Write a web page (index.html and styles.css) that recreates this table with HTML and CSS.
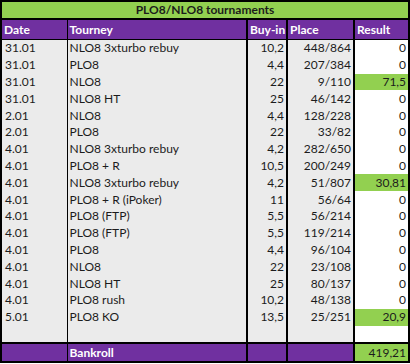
FILE: index.html
```html
<!DOCTYPE html>
<html>
<head>
<meta charset="utf-8">
<link rel="stylesheet" href="styles.css">
</head>
<body>
<table class="sheet">
  <colgroup>
    <col class="c-date"><col class="c-tour"><col class="c-buy"><col class="c-place"><col class="c-res">
  </colgroup>
  <thead>
    <tr class="title"><th colspan="5">PLO8/NLO8 tournaments</th></tr>
    <tr class="head">
      <th class="d">Date</th><th class="t">Tourney</th><th class="b">Buy-in</th><th class="p">Place</th><th class="r">Result</th>
    </tr>
  </thead>
  <tbody>
    <tr><td class="d">31.01</td><td class="t">NLO8 3xturbo rebuy</td><td class="b">10,2</td><td class="p">448/864</td><td class="r">0</td></tr>
    <tr><td class="d">31.01</td><td class="t">PLO8</td><td class="b">4,4</td><td class="p">207/384</td><td class="r">0</td></tr>
    <tr><td class="d">31.01</td><td class="t">NLO8</td><td class="b">22</td><td class="p">9/110</td><td class="r win">71,5</td></tr>
    <tr><td class="d">31.01</td><td class="t">NLO8 HT</td><td class="b">25</td><td class="p">46/142</td><td class="r">0</td></tr>
    <tr><td class="d">2.01</td><td class="t">NLO8</td><td class="b">4,4</td><td class="p">128/228</td><td class="r">0</td></tr>
    <tr><td class="d">2.01</td><td class="t">PLO8</td><td class="b">22</td><td class="p">33/82</td><td class="r">0</td></tr>
    <tr><td class="d">4.01</td><td class="t">NLO8 3xturbo rebuy</td><td class="b">4,2</td><td class="p">282/650</td><td class="r">0</td></tr>
    <tr><td class="d">4.01</td><td class="t">PLO8 + R</td><td class="b">10,5</td><td class="p">200/249</td><td class="r">0</td></tr>
    <tr><td class="d">4.01</td><td class="t">NLO8 3xturbo rebuy</td><td class="b">4,2</td><td class="p">51/807</td><td class="r win">30,81</td></tr>
    <tr><td class="d">4.01</td><td class="t">PLO8 + R (iPoker)</td><td class="b">11</td><td class="p">56/64</td><td class="r">0</td></tr>
    <tr><td class="d">4.01</td><td class="t">PLO8 (FTP)</td><td class="b">5,5</td><td class="p">56/214</td><td class="r">0</td></tr>
    <tr><td class="d">4.01</td><td class="t">PLO8 (FTP)</td><td class="b">5,5</td><td class="p">119/214</td><td class="r">0</td></tr>
    <tr><td class="d">4.01</td><td class="t">PLO8</td><td class="b">4,4</td><td class="p">96/104</td><td class="r">0</td></tr>
    <tr><td class="d">4.01</td><td class="t">NLO8</td><td class="b">22</td><td class="p">23/108</td><td class="r">0</td></tr>
    <tr><td class="d">4.01</td><td class="t">NLO8 HT</td><td class="b">25</td><td class="p">80/137</td><td class="r">0</td></tr>
    <tr><td class="d">4.01</td><td class="t">PLO8 rush</td><td class="b">10,2</td><td class="p">48/138</td><td class="r">0</td></tr>
    <tr><td class="d">5.01</td><td class="t">PLO8 KO</td><td class="b">13,5</td><td class="p">25/251</td><td class="r win">20,9</td></tr>
    <tr><td class="d"></td><td class="t"></td><td class="b"></td><td class="p"></td><td class="r"></td></tr>
  </tbody>
  <tfoot>
    <tr class="total"><td class="d"></td><td class="t">Bankroll</td><td class="b"></td><td class="p"></td><td class="r win">419,21</td></tr>
  </tfoot>
</table>
</body>
</html>
```

FILE: styles.css
```css
html, body {
  margin: 0;
  padding: 0;
  background: #ffffff;
}

.sheet {
  border-collapse: collapse;
  table-layout: fixed;
  width: 410px;
  border: 2px solid #000;
  font-family: Lato, "Open Sans", sans-serif;
  font-size: 12px;
  color: #1c1c1c;
}

.c-date { width: 66px; }
.c-tour { width: 180px; }
.c-buy { width: 40px; }
.c-place { width: 67px; }
.c-res { width: 55px; }

.sheet th, .sheet td {
  padding: 0 2px;
  white-space: nowrap;
  overflow: hidden;
  line-height: 14px;
}

.title th {
  background: #92d050;
  height: 16px;
  text-align: center;
  font-weight: 700;
  border-bottom: 2px solid #000;
}

.head th {
  background: #7030a0;
  color: #ffffff;
  font-weight: 700;
  text-align: left;
  height: 19px;
  border-bottom: 1px solid #000;
}

.head th + th { border-left: 2px solid #000; }
.head th.t { border-left-width: 1px; }

tbody td {
  height: 16.8px;
  padding-top: 0;
  padding-bottom: 0;
  background: #ebebeb;
}

tbody td.d { padding-left: 3px; }
tbody td.t { border-left: 1px solid #000; }
tbody td.b, tbody td.p, tbody td.r {
  border-left: 2px solid #000;
  text-align: right;
}

tbody td.r { background: #ffffff; }

.sheet td.win { background: #92d050; }

.total td {
  background: #7030a0;
  color: #ffffff;
  font-weight: 700;
  height: 17px;
  border-top: 2px solid #000;
}

.total td + td { border-left: 2px solid #000; }
.total td.t { border-left-width: 1px; }
.total td.r {
  background: #92d050;
  color: #1c1c1c;
  font-weight: 400;
  text-align: right;
}
```
